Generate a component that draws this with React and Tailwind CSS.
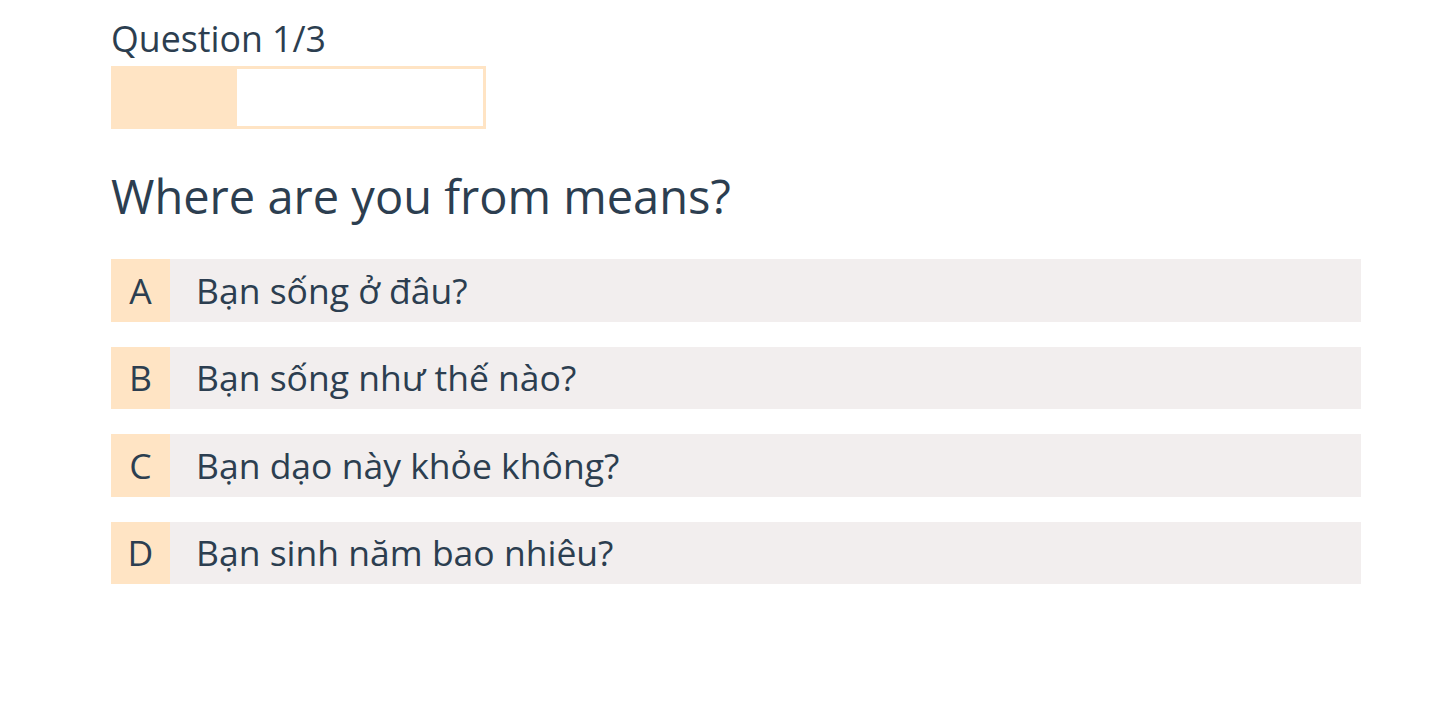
const options = [
  { key: 'A', text: 'Bạn sống ở đâu?' },
  { key: 'B', text: 'Bạn sống như thế nào?' },
  { key: 'C', text: 'Bạn dạo này khỏe không?' },
  { key: 'D', text: 'Bạn sinh năm bao nhiêu?' },
]

export default function App() {
  const current = 1
  const total = 3

  return (
    <div className="min-h-screen bg-white text-[#2c3e50]" style={{ fontFamily: '"Open Sans", "Noto Sans", sans-serif' }}>
      <div className="ml-[111px] w-[1250px] pt-[14px]">
        <div className="text-[35.7px] leading-[48px]">Question {current}/{total}</div>

        {/* progress */}
        <div className="mt-[4px] h-[63px] w-[375px] border-[3px] border-[#ffe4c4] bg-white">
          <div className="h-full bg-[#ffe4c4]" style={{ width: `${(current / total) * 100}%` }} />
        </div>

        <h1 className="mt-[34px] text-[47px] leading-[66px] font-normal">Where are you from means?</h1>

        <div className="mt-[30px] flex flex-col gap-[25px]">
          {options.map((o) => (
            <div key={o.key} className="flex h-[62.5px] items-center bg-[#f2eeee]">
              <div className="flex h-full w-[59px] items-center justify-center bg-[#ffe4c4] text-[35.5px]">{o.key}</div>
              <div className="pl-[26px] text-[35.5px]">{o.text}</div>
            </div>
          ))}
        </div>
      </div>
    </div>
  )
}
